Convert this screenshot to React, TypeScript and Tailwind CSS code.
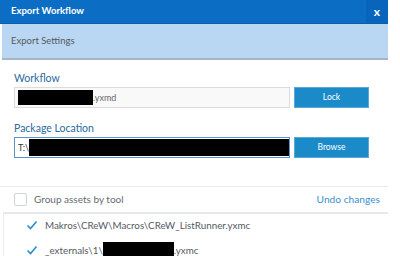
const font = { fontFamily: 'Lato, "Open Sans", sans-serif' };

function Check() {
  return (
    <svg width="12" height="10" viewBox="0 0 12 10" className="shrink-0">
      <path d="M1.5 5.5 L4.5 8.5 L10.5 1.5" fill="none" stroke="#2a8bd0" strokeWidth="1.6" />
    </svg>
  );
}

export default function App() {
  return (
    <div className="w-[400px] h-[256px] bg-white overflow-hidden" style={font}>
      <div className="w-[388px] flex flex-col">
        <div className="shrink-0 h-[24px] bg-[#0b6ec4] flex items-center justify-between border-b border-[#0a5fa8]">
          <span className="pl-[11px] text-[9.5px] font-bold text-white">Export Workflow</span>
          <span className="w-[22px] h-full flex items-center justify-center bg-[#0965bb] text-white text-[12px] font-bold">x</span>
        </div>
        <div className="shrink-0 h-[36px] bg-[#b9d7f2] flex items-center pl-[9px] border-b-2 border-[#a9b4bf] ml-[2px]">
          <span className="text-[9.5px] text-[#555a60]">Export Settings</span>
        </div>

        <div className="shrink-0 pl-[14px] pt-[10px]">
          <div className="text-[10.5px] text-[#2a6aa0] leading-[17px]">Workflow</div>
          <div className="flex items-center gap-[4px]">
            <div className="w-[276px] h-[21px] border border-[#dcdcdc] bg-[#f9f9f9] flex items-center pl-[3px]">
              <span className="w-[75px] h-[15px] bg-black" />
              <span className="text-[9px] text-[#666]">.yxmd</span>
            </div>
            <div className="w-[75px] h-[21px] bg-[#1a8bc8] border border-[#58a9d9] flex items-center justify-center text-[8.5px] text-white">Lock</div>
          </div>

          <div className="text-[10.5px] text-[#2a6aa0] leading-[17px] mt-[12px]">Package Location</div>
          <div className="flex items-center gap-[4px]">
            <div className="w-[276px] h-[21px] border border-[#5b93d1] bg-white flex items-center pl-[3px]">
              <span className="text-[9px] text-[#333]">T:\</span>
              <span className="flex-1 h-[17px] bg-black" />
            </div>
            <div className="w-[75px] h-[21px] bg-[#1a8bc8] border border-[#58a9d9] flex items-center justify-center text-[8.5px] text-white">Browse</div>
          </div>
        </div>

        <div className="shrink-0 mt-[28px] border-t border-[#e8ebee] h-[26px] flex items-center justify-between pl-[14px] pr-[8px]">
          <div className="flex items-center gap-[7px]">
            <span className="w-[13px] h-[13px] rounded-[2px] border border-[#cfd4d9] bg-white" />
            <span className="text-[10px] text-[#666b70]">Group assets by tool</span>
          </div>
          <span className="text-[10.2px] text-[#3d8fcf]">Undo changes</span>
        </div>
        <div className="shrink-0 h-[60px] border-t-2 border-[#e6e9ec] ml-[3px] border-l border-l-[#eceef0] pl-[22px] pt-[4px] flex flex-col gap-[11px]">
          <div className="h-[14px] flex items-center gap-[7px]">
            <Check />
            <span className="text-[9.8px] text-[#555a5f]">Makros\CReW\Macros\CReW_ListRunner.yxmc</span>
          </div>
          <div className="h-[14px] flex items-center gap-[7px]">
            <Check />
            <span className="text-[9.8px] text-[#555a5f] flex items-center">_externals\1\<span className="inline-block w-[71px] h-[16px] bg-black" />.yxmc</span>
          </div>
        </div>
      </div>
    </div>
  );
}
